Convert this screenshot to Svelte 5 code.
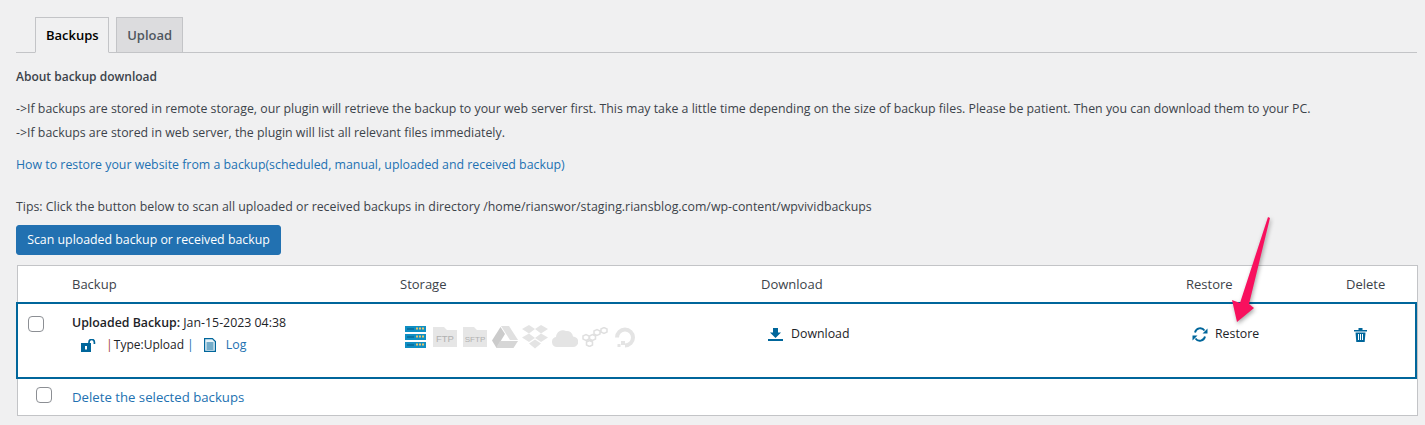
<script lang="ts">
  let tab: string = $state('Backups');
  const tabs = ['Backups', 'Upload'];
</script>

<div class="page">
  <div class="tabs">
    {#each tabs as t}
      <button class="tab" class:active={tab === t} onclick={() => (tab = t)}>{t}</button>
    {/each}
  </div>

  <p class="heading">About backup download</p>
  <p class="line first">-&gt;If backups are stored in remote storage, our plugin will retrieve the backup to your web server first. This may take a little time depending on the size of backup files. Please be patient. Then you can download them to your PC.</p>
  <p class="line">-&gt;If backups are stored in web server, the plugin will list all relevant files immediately.</p>
  <p class="line link-line"><a href="#how">How to restore your website from a backup(scheduled, manual, uploaded and received backup)</a></p>
  <p class="line tips">Tips: Click the button below to scan all uploaded or received backups in directory /home/rianswor/staging.riansblog.com/wp-content/wpvividbackups</p>
  <button class="scan">Scan uploaded backup or received backup</button>

  <div class="table">
    <div class="row head">
      <span></span>
      <span>Backup</span>
      <span>Storage</span>
      <span>Download</span>
      <span>Restore</span>
      <span>Delete</span>
    </div>

    <div class="row item">
      <span class="check"><input type="checkbox" /></span>
      <div class="info">
        <div><strong>Uploaded Backup:</strong> Jan-15-2023 04:38</div>
        <div class="meta">
          <svg class="lock" width="15" height="13" viewBox="0 0 15 13"><path d="M0 4h10v9H0z" fill="#00669b"/><path d="M4 7h2v3.500H4z" fill="#fff"/><path d="M8 4V3.200a2.700 2.700 0 0 1 5.400 0V5" fill="none" stroke="#00669b" stroke-width="1.700"/></svg>
          <span class="sep-red">|</span>
          <span class="type">Type:Upload</span>
          <span class="sep-blue">|</span>
          <svg class="doc" width="12" height="14" viewBox="0 0 12 14"><path d="M.6.600h7.800l3 3v9.800H.6z" fill="#e8f3f8" stroke="#00669b" stroke-width="1.200"/><path d="M2.500 5h7M2.500 7h7M2.500 9h7M2.500 11h7" stroke="#00669b"/></svg>
          <a href="#log">Log</a>
        </div>
      </div>
      <div class="storage">
        <svg width="21" height="22" viewBox="0 0 21 22">
          <path d="M0 0h21v6H0zM0 8h21v6H0zM0 16h21v6H0z" fill="#0f8fc4"/>
          <path d="M11 2.500h8M11 10.500h8M11 18.500h8" stroke="#e9c46a" stroke-width="2" stroke-dasharray="2 1"/>
          <path d="M2 3h7M2 11h7M2 19h7" stroke="#0a6a96" stroke-width="1.500"/>
        </svg>
        <svg class="ftp" width="24" height="20" viewBox="0 0 24 20"><path d="M0 0h11l3 3h10v17H0z" fill="#e6e6e6"/><text x="12" y="15" text-anchor="middle" class="folder-text">FTP</text></svg>
        <svg class="sftp" width="24" height="20" viewBox="0 0 24 20"><path d="M0 0h11l3 3h10v17H0z" fill="#e6e6e6"/><text x="12" y="15" text-anchor="middle" class="folder-text small">SFTP</text></svg>
        <svg class="drive" width="26" height="22" viewBox="0 0 26 22"><path d="M9 0h8l9 14h-8z" fill="#e0e0e0"/><path d="M8.500 1 13 8 4.500 22 0 14.500z" fill="#cbcbcb"/><path d="M8 15h18l-4.500 7H4z" fill="#d6d6d6"/></svg>
        <svg width="26" height="24" viewBox="0 0 26 24" fill="#e4e4e4"><path d="M7 0l6 4-6 4.500L0 4zM19 0l7 4-7 4.500L13 4zM7 8.500 13 13l-6 4-7-4.500zM19 8.500l7 4-7 4.500-6-4zM7 18.500l6-4 6 4-6 5z"/></svg>
        <svg width="26" height="19" viewBox="0 0 26 19"><path d="M5 19a5 5 0 0 1-1-9.900A7 7 0 0 1 14 3a6 6 0 0 1 7 5.500A5.200 5.200 0 0 1 21 19z" fill="#e4e4e4"/></svg>
        <svg width="26" height="20" viewBox="0 0 26 20" fill="none" stroke="#e0e0e0" stroke-width="1.500"><path d="M1 9l3-1.500L7 9v3l-3 1.500L1 12zM7.500 9l3-1.500 3 1.500v3l-3 1.500-3-1.500zM4.500 15l3-1.500 3 1.500v3l-3 1.500-3-1.500zM12 4l3-1.500L18 4v3l-3 1.500L12 7zM19 2l3-1.500L25 2v3l-3 1.500L19 5z"/></svg>
        <svg class="ocean" width="22" height="21" viewBox="0 0 22 21" fill="none"><path d="M11 18.500a8 8 0 1 0-8-8" stroke="#e4e4e4" stroke-width="4"/><path d="M7 14h4v4H7zM3.500 17h3v3h-3z" fill="#e4e4e4"/></svg>
      </div>
      <div class="action">
        <svg width="15" height="13" viewBox="0 0 15 13"><path d="M5 0h5v4.500h3L7.500 10 2 4.500h3z" fill="#00669b"/><path d="M0 11h15v2H0z" fill="#00669b"/></svg>
        <span>Download</span>
      </div>
      <div class="action restore">
        <svg width="16" height="15" viewBox="0 0 16 15" fill="none"><path d="M3 5.500A5.300 5.300 0 0 1 12.500 3.500M13 9.500A5.300 5.300 0 0 1 3.500 11.500" stroke="#00669b" stroke-width="1.900"/><path d="M15.500 1.500v5h-5zM.5 13.500v-5h5z" fill="#00669b"/></svg>
        <span>Restore</span>
      </div>
      <div class="trash">
        <svg width="13" height="14" viewBox="0 0 13 14"><path d="M0 2h13v1.500H0zM4.500 0h4v2h-4z" fill="#00669b"/><path d="M1.500 4.500h10L10.700 14H2.300z" fill="#00669b"/><path d="M4.500 6v6M6.500 6v6M8.500 6v6" stroke="#fff"/></svg>
      </div>
    </div>

    <div class="row foot">
      <span class="check"><input type="checkbox" /></span>
      <a href="#delete">Delete the selected backups</a>
    </div>
  </div>

  <svg class="arrow" width="50" height="115" viewBox="0 0 50 115">
    <path d="M46 0l2 1-21 86 5 4-17 14-5-22 8 3z" fill="#f8105e"/>
  </svg>
</div>

<style>
  :global(body) {
    background: #f0f0f1;
    margin: 0;
  }

  .page {
    position: relative;
    height: 425px;
    overflow: hidden;
    box-sizing: border-box;
    padding: 17px 8px 0 16px;
    font-family: "Open Sans", "Noto Sans", sans-serif;
    font-size: 12.35px;
    line-height: 20px;
    color: #3c434a;
  }

  a {
    color: #2271b1;
    text-decoration: none;
  }

  p {
    margin: 0;
  }

  .tabs {
    display: flex;
    gap: 7px;
    height: 35px;
    padding-left: 19px;
    border-bottom: 1px solid #c3c4c7;
  }

  .tab {
    box-sizing: border-box;
    height: 36px;
    padding: 0 9.500px 0 10px;
    border: 1px solid #c3c4c7;
    border-bottom: 1px solid #c3c4c7;
    background: #dcdcde;
    color: #50575e;
    font: 600 13px/20px "Open Sans", sans-serif;
    cursor: pointer;
  }

  .tab.active {
    background: #f0f0f1;
    border-bottom-color: #f0f0f1;
    color: #000;
  }

  .heading {
    margin-top: 14px;
    font-size: 12px;
    font-weight: 600;
  }

  .line.first {
    margin-top: 12px;
  }

  .line {
    margin-top: 4px;
  }

  .link-line {
    margin-top: 12px;
  }

  .tips {
    margin-top: 22px;
  }

  .scan {
    display: block;
    box-sizing: border-box;
    width: 265px;
    height: 30px;
    margin-top: 8px;
    padding: 0;
    border: 1px solid #2271b1;
    border-radius: 3px;
    background: #2271b1;
    color: #fff;
    font: 12.35px/20px "Open Sans", sans-serif;
    white-space: nowrap;
    cursor: pointer;
  }

  .table {
    box-sizing: border-box;
    width: 1401px;
    height: 151px;
    margin: 10px 0 0 1px;
    background: #fff;
    border: 1px solid #c3c4c7;
  }

  .row {
    display: grid;
    grid-template-columns: 54px 328px 361px 425px 160px 1fr;
  }

  .head {
    height: 36px;
    align-items: center;
    font-size: 13px;
  }

  .item {
    box-sizing: border-box;
    height: 77px;
    margin: 0 0 0 -2px;
    padding: 9px 0 0 0;
    border: 2px solid #00669b;
    grid-template-columns: 54px 328px 361px 425px 160px 1fr;
    color: #1d2327;
  }

  .check {
    padding-left: 10px;
  }

  input[type="checkbox"] {
    appearance: none;
    display: block;
    box-sizing: border-box;
    width: 16px;
    height: 16px;
    margin: 3px 0 0;
    background: #fff;
    border: 1px solid #8c8f94;
    border-radius: 4px;
  }

  .foot .check {
    padding-left: 18px;
  }

  .foot {
    grid-template-columns: 54px 1fr;
    align-items: center;
    height: 36px;
    font-size: 13.200px;
  }

  .foot input {
    margin: 0 0 4px;
  }

  .info strong {
    font-weight: 600;
  }

  .meta {
    display: flex;
    align-items: center;
    margin-top: 2px;
    padding-left: 9px;
  }

  .lock {
    margin-right: 10px;
  }

  .sep-red {
    color: #a4443a;
    margin-right: 1px;
  }

  .type {
    font-size: 12px;
  }

  .sep-blue {
    color: #2271b1;
    margin-left: 3px;
  }

  .doc {
    margin: 0 0 0 10px;
  }

  .meta a {
    margin-left: 10px;
  }

  .storage {
    display: flex;
    align-items: center;
    gap: 4px;
    height: 26px;
    margin: 11px 0 0 5px;
  }

  .ftp {
    margin-left: 3px;
  }

  .sftp {
    margin-left: 2px;
  }

  .drive {
    margin-left: 1px;
  }

  .ocean {
    margin-left: 2px;
  }

  .folder-text {
    font-family: "Liberation Sans", sans-serif;
    font-size: 9.500px;
    fill: #b0b0b0;
  }

  .folder-text.small {
    font-size: 8px;
  }

  .action {
    display: flex;
    align-items: center;
    gap: 8px;
    height: 24px;
    margin-top: 9px;
    padding-left: 7px;
  }

  .restore {
    gap: 7px;
    padding-left: 6px;
  }

  .trash {
    display: flex;
    align-items: center;
    height: 26px;
    margin-top: 9px;
    padding-left: 8px;
  }

  .arrow {
    position: absolute;
    left: 1222px;
    top: 217px;
    filter: drop-shadow(1px 2px 2px rgba(0, 0, 0, 0.35));
    pointer-events: none;
  }
</style>
